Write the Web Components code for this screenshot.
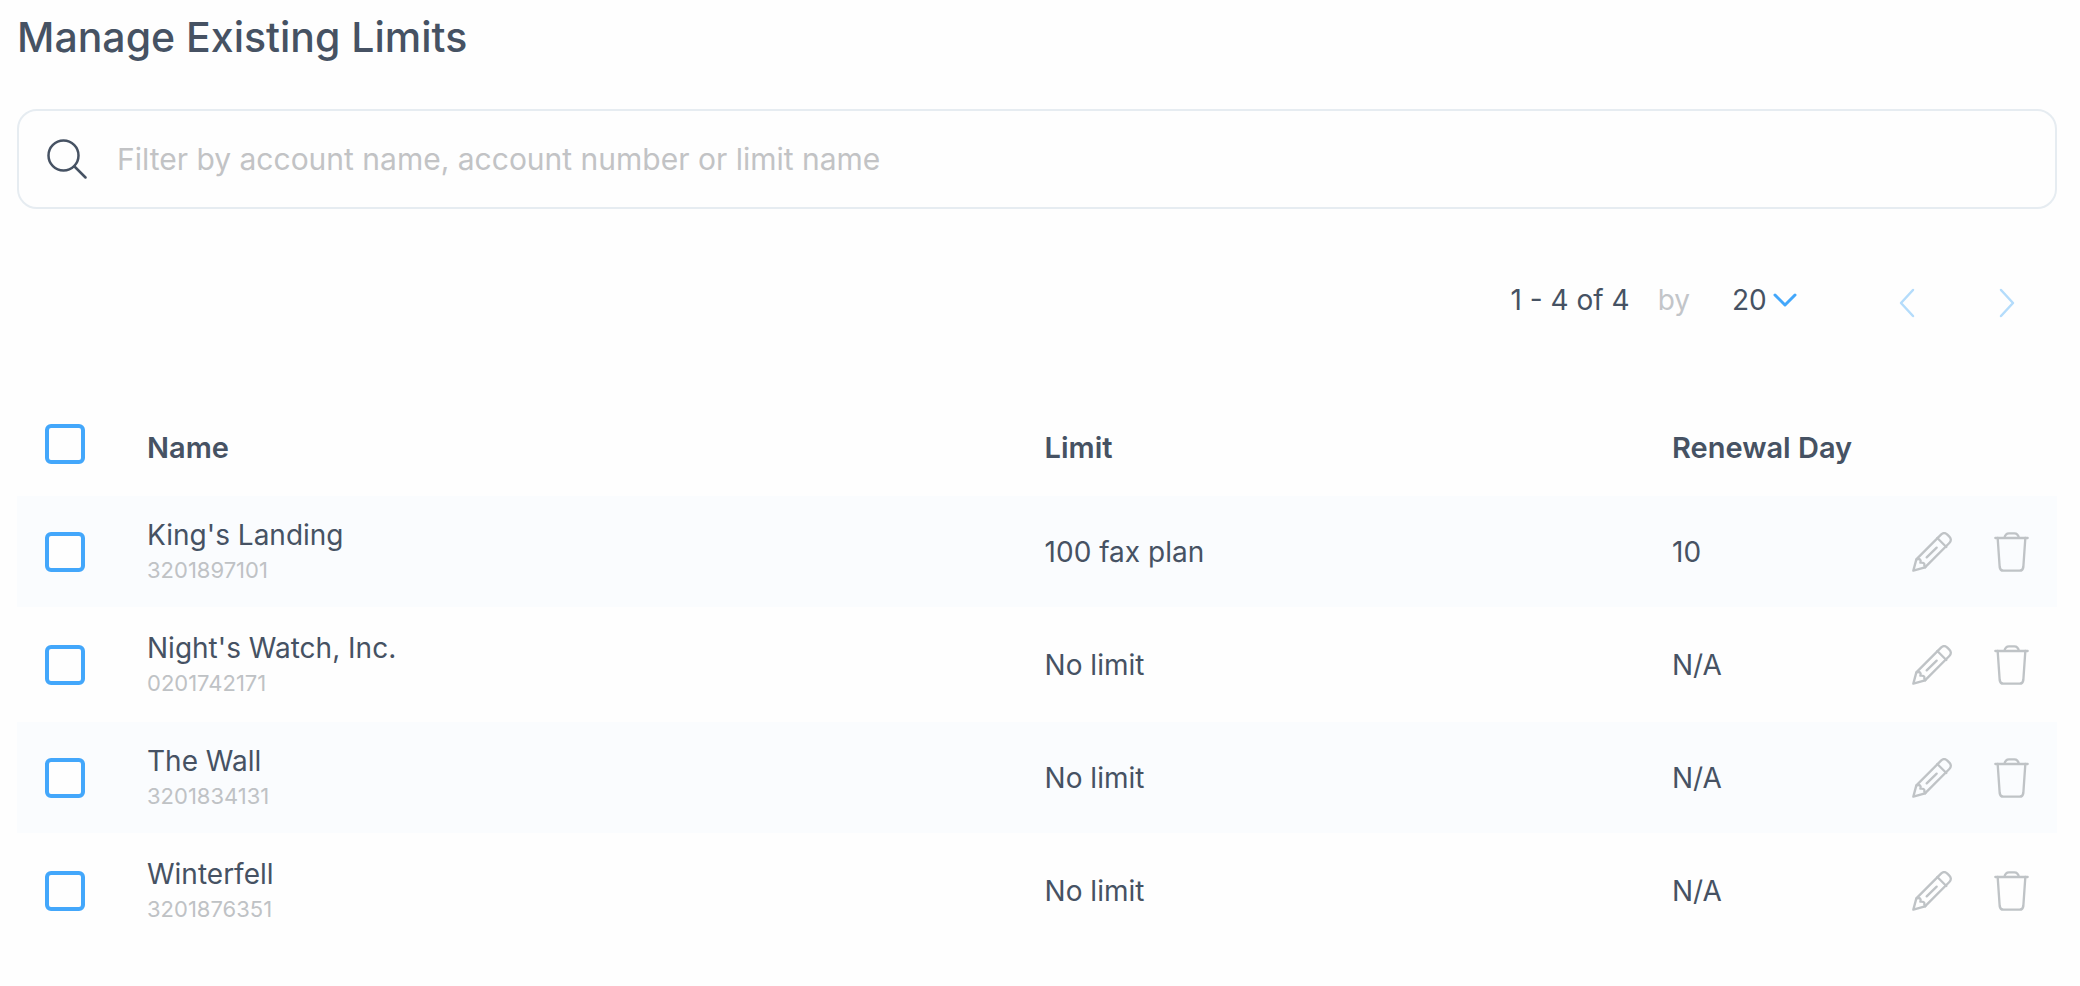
<!DOCTYPE html>
<html lang="en">
<head>
<meta charset="utf-8">
<meta name="viewport" content="width=device-width, initial-scale=1">
<title>Manage Existing Limits</title>
<style>
  body {
    margin: 0;
    background: #fefefe;
    color: #465263;
    font: 28px/36px Inter, "Open Sans", "Liberation Sans", sans-serif;
  }
</style>
</head>
<body>
<limits-page heading="Manage Existing Limits">
  <search-field placeholder="Filter by account name, account number or limit name"></search-field>
  <page-controls from="1" to="4" total="4" size="20"></page-controls>
  <limits-table></limits-table>
</limits-page>

<script>
const ICONS = {
  search: {
    box: [40, 40],
    body: `<circle cx="16.5" cy="16.500" r="15" stroke-width="2.500"/><path d="M27.500 27.500l11 11" stroke-width="2.500"/>`
  },
  down: {
    box: [24, 14],
    body: `<path d="M2 2l10 10L22 2" stroke-width="3"/>`
  },
  left: {
    box: [16, 30],
    body: `<path d="M14 2L2 15l12 13" stroke-width="2.5"/>`
  },
  right: {
    box: [16, 30],
    body: `<path d="M2 2l12 13L2 28" stroke-width="2.5"/>`
  },
  pencil: {
    box: [40, 40],
    view: "0 0 120 120",
    body: `<g stroke-width="7">
      <path d="M4 116L13 82 87 8C93 2 100 2 106 8l6 6c6 6 6 13 0 19L39 106z"/>
      <path d="M76 18l27 27M44 76l30-29M14 82c10-3 14 2 11 10 9-1 14 2 12 9l3 5"/>
    </g>`
  },
  trash: {
    box: [35, 40],
    view: "0 0 105 120",
    body: `<g stroke-width="7">
      <path d="M4 18h97M31 18C33 8 38 4 45 4h16c8 0 12 4 14 14"/>
      <path d="M11 18l6 87c1 8 4 11 11 11h49c7 0 10-3 11-11l6-87"/>
    </g>`
  }
};

class UiIcon extends HTMLElement {
  constructor() {
    super();
    this.attachShadow({ mode: "open" });
  }

  connectedCallback() {
    const icon = ICONS[this.getAttribute("name")];
    const [w, h] = icon.box;
    this.shadowRoot.innerHTML = `
      <style>
        :host { display: block; flex: none; }
        svg { display: block; fill: none; stroke: currentColor; stroke-linecap: round; stroke-linejoin: round; }
      </style>
      <svg width="${w}" height="${h}" viewBox="${icon.view || `0 0 ${w} ${h}`}" aria-hidden="true">${icon.body}</svg>
    `;
  }
}

class LimitsPage extends HTMLElement {
  constructor() {
    super();
    this.attachShadow({ mode: "open" });
  }

  connectedCallback() {
    this.shadowRoot.innerHTML = `
      <style>
        :host { display: block; padding: 9px 23px 40px 17px; }
        h1 { margin: 0 0 44px; font-size: 41px; line-height: 56px; font-weight: 500; }
      </style>
      <h1>${this.getAttribute("heading")}</h1>
      <slot></slot>
    `;
  }
}

class SearchField extends HTMLElement {
  constructor() {
    super();
    this.attachShadow({ mode: "open" });
  }

  connectedCallback() {
    const text = this.getAttribute("placeholder");
    this.shadowRoot.innerHTML = `
      <style>
        :host { display: block; }
        label {
          display: flex;
          align-items: center;
          gap: 30px;
          padding: 28px;
          border: 2px solid #e6ecf1;
          border-radius: 20px;
        }
        input {
          flex: 1;
          min-width: 0;
          padding: 0;
          border: 0;
          outline: 0;
          background: none;
          color: inherit;
          font: inherit;
          font-size: 30px;
        }
        input::placeholder { color: #c2c3c5; opacity: 1; }
      </style>
      <label>
        <ui-icon name="search"></ui-icon>
        <input type="text" placeholder="${text}" aria-label="${text}">
      </label>
    `;
  }
}

class PageControls extends HTMLElement {
  constructor() {
    super();
    this.attachShadow({ mode: "open" });
  }

  connectedCallback() {
    const from = this.getAttribute("from");
    const to = this.getAttribute("to");
    const total = this.getAttribute("total");
    const size = this.getAttribute("size");
    this.shadowRoot.innerHTML = `
      <style>
        :host {
          display: flex;
          align-items: center;
          justify-content: flex-end;
          padding: 73px 0;
        }
        label { margin: 0 42px 0 28px; color: #c2c5c9; }
        .size { display: grid; align-items: center; margin-right: 60px; }
        .size > * { grid-area: 1 / 1; }
        .size ui-icon { justify-self: end; color: #43a7fb; pointer-events: none; }
        select {
          appearance: none;
          padding: 0 30px 0 0;
          border: 0;
          background: none;
          color: inherit;
          font: inherit;
        }
        button {
          display: flex;
          justify-content: center;
          width: 100px;
          padding: 6px 0 0;
          border: 0;
          background: none;
          color: #b4dcfb;
        }
      </style>
      <span>${from} - ${to} of ${total}</span>
      <label for="size">by</label>
      <div class="size">
        <select id="size"><option>${size}</option></select>
        <ui-icon name="down"></ui-icon>
      </div>
      <button type="button" aria-label="Previous page" disabled><ui-icon name="left"></ui-icon></button>
      <button type="button" aria-label="Next page" disabled><ui-icon name="right"></ui-icon></button>
    `;
  }
}

class LimitsTable extends HTMLElement {
  constructor() {
    super();
    this.attachShadow({ mode: "open" });
    this.rows = [
      { name: "King's Landing", number: "3201897101", limit: "100 fax plan", day: "10" },
      { name: "Night's Watch, Inc.", number: "0201742171", limit: "No limit", day: "N/A" },
      { name: "The Wall", number: "3201834131", limit: "No limit", day: "N/A" },
      { name: "Winterfell", number: "3201876351", limit: "No limit", day: "N/A" }
    ];
  }

  connectedCallback() {
    this.render();
    const all = this.shadowRoot.querySelector("thead input");
    const boxes = this.shadowRoot.querySelectorAll("tbody input");
    all.addEventListener("change", () => {
      boxes.forEach((box) => { box.checked = all.checked; });
    });
  }

  row({ name, number, limit, day }) {
    return `
      <tr>
        <td class="check"><input type="checkbox" aria-label="Select ${name}"></td>
        <td>${name}<small>${number}</small></td>
        <td>${limit}</td>
        <td>${day}</td>
        <td>
          <div class="actions">
            <button type="button" aria-label="Edit ${name}"><ui-icon name="pencil"></ui-icon></button>
            <button type="button" aria-label="Delete ${name}"><ui-icon name="trash"></ui-icon></button>
          </div>
        </td>
      </tr>
    `;
  }

  render() {
    this.shadowRoot.innerHTML = `
      <style>
        :host { display: block; }
        table { width: 100%; table-layout: fixed; border-spacing: 0 2px; }
        th, td { padding: 0; text-align: left; vertical-align: middle; }
        th { height: 101px; box-sizing: border-box; font-size: 29px; font-weight: 600; }
        th:not(.check) { padding-top: 8px; }
        tbody td { height: 111px; }
        tbody tr:nth-child(odd) { background: #fafcfe; }
        th.check, td.check { padding-left: 28px; }
        .col-check { width: 130px; }
        .col-name { width: 44%; }
        .col-day { width: 240px; }
        .col-actions { width: 145px; }
        small { display: block; font-size: 22px; line-height: 34px; color: #bfc2c5; }
        input {
          appearance: none;
          display: block;
          box-sizing: border-box;
          width: 40px;
          height: 40px;
          margin: 0;
          border: 4px solid #43a7fb;
          border-radius: 6px;
          background: #fefefe;
        }
        input:checked { background: #43a7fb; }
        .actions { display: flex; justify-content: flex-end; gap: 42px; padding-right: 28px; }
        button { padding: 0; border: 0; background: none; color: #bfc3c6; cursor: pointer; }
      </style>
      <table>
        <colgroup>
          <col class="col-check"><col class="col-name"><col><col class="col-day"><col class="col-actions">
        </colgroup>
        <thead>
          <tr>
            <th class="check"><input type="checkbox" aria-label="Select all"></th>
            <th scope="col">Name</th>
            <th scope="col">Limit</th>
            <th scope="col">Renewal Day</th>
            <td></td>
          </tr>
        </thead>
        <tbody>${this.rows.map((row) => this.row(row)).join("")}</tbody>
      </table>
    `;
  }
}

customElements.define("ui-icon", UiIcon);
customElements.define("limits-page", LimitsPage);
customElements.define("search-field", SearchField);
customElements.define("page-controls", PageControls);
customElements.define("limits-table", LimitsTable);
</script>
</body>
</html>
